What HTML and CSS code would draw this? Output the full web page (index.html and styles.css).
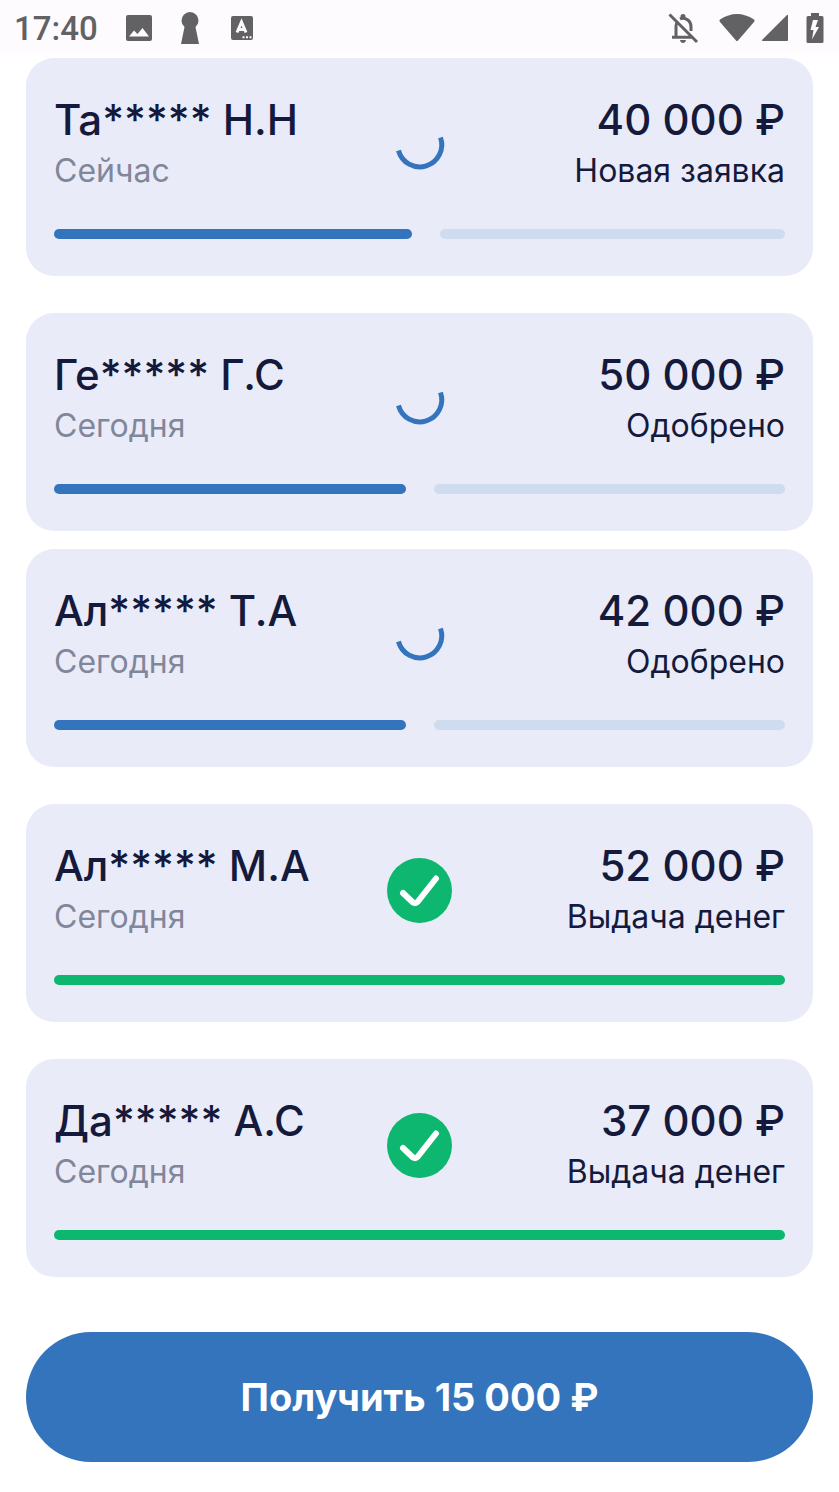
FILE: index.html
```
<!DOCTYPE html>
<html lang="ru">
<head>
    <meta charset="UTF-8">
    <meta name="viewport" content="width=device-width, initial-scale=1.0">
    <title>Заявки</title>
    <link rel="stylesheet" href="styles.css">
</head>
<body>
    <!-- shared icons -->
    <svg class="sprite" aria-hidden="true">
        <symbol id="spinner" viewBox="0 0 66 66">
            <path d="M11.500 38.500A22 22 0 1 0 53.500 25.500" fill="none" stroke="#3474bd" stroke-width="5"/>
        </symbol>
        <symbol id="check" viewBox="0 0 66 66">
            <circle cx="32.500" cy="32.500" r="32.500" fill="#0db76f"/>
            <path d="M16 35L26 44.500Q28.500 46 30.500 44L49 20.500" fill="none" stroke="#fff" stroke-width="6" stroke-linecap="round" stroke-linejoin="round"/>
        </symbol>
    </svg>

    <header class="status-bar">
        <div class="status-left">
            <span class="clock">17:40</span>
            <svg class="icon-image" viewBox="0 0 28 28" width="28" height="28">
                <path fill-rule="evenodd" d="M3 1H25Q27 1 27 3V25Q27 27 25 27H3Q1 27 1 25V3Q1 1 3 1ZM4 22.500H24L17.500 14L12.500 20L9 16.500Z"/>
            </svg>
            <svg class="icon-keyhole" viewBox="0 0 20 34" width="20" height="34">
                <path d="M4.500 16A8.500 8.500 0 1 1 15.500 16L19 33H1Z"/>
            </svg>
            <svg class="icon-letter" viewBox="0 0 24 26" width="24" height="26">
                <rect x="1" y="1" width="22" height="24" rx="2"/>
                <path class="cut" d="M7 17.500L11.500 7L16 17.500M8.500 14.500H14.500"/>
                <path class="dots" d="M12.500 22.200h2M16 22.200h2M19.500 22.200h2"/>
            </svg>
        </div>
        <div class="status-right">
            <svg class="icon-bell" viewBox="0 0 32 34" width="32" height="34">
                <path class="stroke" d="M2.500 3.500L30 31M9 26V15Q9 12.500 10.500 11M5 26.200H25M13 8Q16 6.500 19 8Q24 10 24 16V20"/>
                <path d="M13.500 8V5.500a2.500 2.500 0 0 1 5 0V8ZM13 29H19Q18.500 32 16 32Q13.500 32 13 29Z"/>
            </svg>
            <svg class="icon-wifi" viewBox="0 0 36 30" width="36" height="30">
                <path d="M1 6.500Q18-4.500 35 6.500Q36 7.500 35 9L19 27.500Q18 28.500 17 27.500L1 9Q0 7.500 1 6.500Z"/>
            </svg>
            <svg class="icon-signal" viewBox="0 0 28 28" width="28" height="28">
                <path d="M27 2V26Q27 27 26 27H2Q0 27 1.500 25.500L25.500 1.500Q27 0 27 2Z"/>
            </svg>
            <svg class="icon-battery" viewBox="0 0 20 32" width="20" height="32">
                <path fill-rule="evenodd" d="M6 1H14V4H17Q18.500 4 18.500 5.500V29.500Q18.500 31 17 31H3Q1.500 31 1.500 29.500V5.500Q1.500 4 3 4H6ZM8 8L5.500 18H8.500L7 27.500L14 15H10.500L13 8Z"/>
            </svg>
        </div>
    </header>

    <main class="feed">
        <article class="card card-spaced">
            <div class="card-top">
                <div class="person">
                    <div class="title">Та***** Н.Н</div>
                    <div class="date">Сейчас</div>
                </div>
                <svg class="state"><use href="#spinner"/></svg>
                <div class="loan">
                    <div class="title">40 000 ₽</div>
                    <div class="status">Новая заявка</div>
                </div>
            </div>
            <div class="progress">
                <span class="step step-active step-growing"></span>
                <span class="step"></span>
            </div>
        </article>

        <article class="card">
            <div class="card-top">
                <div class="person">
                    <div class="title">Ге***** Г.С</div>
                    <div class="date">Сегодня</div>
                </div>
                <svg class="state"><use href="#spinner"/></svg>
                <div class="loan">
                    <div class="title">50 000 ₽</div>
                    <div class="status">Одобрено</div>
                </div>
            </div>
            <div class="progress">
                <span class="step step-active"></span>
                <span class="step"></span>
            </div>
        </article>

        <article class="card card-spaced">
            <div class="card-top">
                <div class="person">
                    <div class="title">Ал***** Т.А</div>
                    <div class="date">Сегодня</div>
                </div>
                <svg class="state"><use href="#spinner"/></svg>
                <div class="loan">
                    <div class="title">42 000 ₽</div>
                    <div class="status">Одобрено</div>
                </div>
            </div>
            <div class="progress">
                <span class="step step-active"></span>
                <span class="step"></span>
            </div>
        </article>

        <article class="card card-spaced">
            <div class="card-top">
                <div class="person">
                    <div class="title">Ал***** М.А</div>
                    <div class="date">Сегодня</div>
                </div>
                <svg class="state"><use href="#check"/></svg>
                <div class="loan">
                    <div class="title">52 000 ₽</div>
                    <div class="status">Выдача денег</div>
                </div>
            </div>
            <div class="progress">
                <span class="step step-done"></span>
            </div>
        </article>

        <article class="card">
            <div class="card-top">
                <div class="person">
                    <div class="title">Да***** А.С</div>
                    <div class="date">Сегодня</div>
                </div>
                <svg class="state"><use href="#check"/></svg>
                <div class="loan">
                    <div class="title">37 000 ₽</div>
                    <div class="status">Выдача денег</div>
                </div>
            </div>
            <div class="progress">
                <span class="step step-done"></span>
            </div>
        </article>

        <button class="get-money" type="button">Получить 15 000 ₽</button>
    </main>
</body>
</html>
```
FILE: styles.css
```
* {
    box-sizing: border-box;
}

body {
    margin: 0;
    background: #fff;
    color: #151a3c;
    font-family: Inter, "Liberation Sans", sans-serif;
}

.sprite {
    position: absolute;
    width: 0;
    height: 0;
}

/* status bar */
.status-bar {
    display: flex;
    justify-content: space-between;
    align-items: center;
    height: 58px;
    padding: 0 14px 2px;
    background: linear-gradient(#fefbff 90%, #fff);
    color: #626164;
    fill: #626164;
}

.status-left,
.status-right {
    display: flex;
    align-items: center;
}

.clock {
    font-family: Roboto, sans-serif;
    font-size: 33px;
    font-weight: 500;
}

.icon-image {
    margin-left: 27px;
}

.icon-keyhole {
    margin-left: 27px;
}

.icon-letter {
    margin-left: 30px;
}

.icon-letter .cut,
.icon-letter .dots {
    fill: none;
    stroke: #fefbff;
    stroke-width: 3;
}

.icon-letter .dots {
    stroke-width: 2;
}

.icon-bell .stroke {
    fill: none;
    stroke: #626164;
    stroke-width: 3;
}

.icon-wifi {
    margin-left: 20px;
}

.icon-signal {
    margin-left: 6px;
}

.icon-battery {
    margin-left: 16px;
}

/* applications */
.feed {
    display: flex;
    flex-direction: column;
    padding: 0 26px 30px;
}

.card {
    margin-bottom: 18px;
    padding: 36px 28px 37px;
    border-radius: 28px;
    background: #e9ecf8;
}

.card-spaced {
    margin-bottom: 37px;
}

.card-top {
    display: grid;
    grid-template-columns: 1fr auto 1fr;
    align-items: center;
}

.state {
    display: block;
    width: 66px;
    height: 66px;
}

.title {
    font-size: 42px;
    font-weight: 500;
    line-height: 52px;
    white-space: nowrap;
}

.date,
.status {
    font-size: 32px;
    font-weight: 400;
    font-optical-sizing: none;
    line-height: 50px;
    white-space: nowrap;
}

.date {
    color: #81869b;
}

.loan {
    text-align: right;
}

.progress {
    display: flex;
    gap: 28px;
    margin-top: 33px;
}

.step {
    flex: 1;
    height: 10px;
    border-radius: 5px;
    background: #cfdbef;
}

.step-active {
    background: #3474bd;
}

.step-growing {
    flex-grow: 1.04;
}

.step-done {
    background: #0db76f;
}

.get-money {
    height: 130px;
    margin-top: 37px;
    border: none;
    border-radius: 65px;
    background: #3474bd;
    color: #fff;
    font-family: inherit;
    font-size: 38px;
    font-weight: 700;
    cursor: pointer;
}
```
